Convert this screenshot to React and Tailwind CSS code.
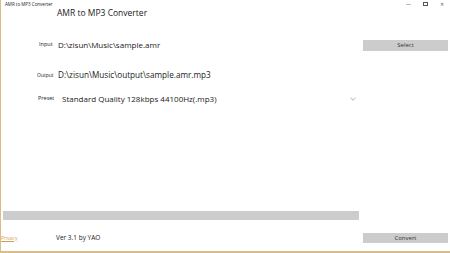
export default function App() {
  const f = { fontFamily: '"Open Sans", "Noto Sans", sans-serif' };
  return (
    <div
      className="w-[450px] h-[253px] bg-white border-l border-b-2 border-[#d9bd8c] flex flex-col text-[#1a1a1a] overflow-hidden"
      style={f}
    >
      <div className="h-[8px] flex items-center justify-between pl-[4px] pr-[6px]">
        <span className="text-[4.5px] leading-none">AMR to MP3 Converter</span>
        <div className="flex items-center gap-[12px] text-[5px] leading-none text-[#555]">
          <span>—</span>
          <span className="w-[5px] h-[4px] border border-[#555]" />
          <span>✕</span>
        </div>
      </div>
      <div className="h-[10px] flex items-center pl-[56px]">
        <span className="text-[8.5px] leading-none">AMR to MP3 Converter</span>
      </div>
      <div className="mt-[21px] h-[12px] flex items-center">
        <span className="ml-[38px] w-[19px] text-[5.5px] leading-none">Input</span>
        <span className="text-[8px] leading-none flex-1">D:\zisun\Music\sample.amr</span>
        <button className="mr-[2px] w-[85px] h-[11px] bg-[#cccccc] text-[6px] leading-none text-[#333]">Select</button>
      </div>
      <div className="mt-[18px] h-[12px] flex items-center">
        <span className="ml-[36px] w-[21px] text-[5px] leading-none">Output</span>
        <span className="text-[8.2px] leading-none">D:\zisun\Music\output\sample.amr.mp3</span>
      </div>
      <div className="mt-[12px] h-[12px] flex items-center">
        <span className="ml-[37px] w-[24px] text-[5.5px] leading-none">Preset</span>
        <span className="text-[8px] leading-none flex-1">Standard Quality 128kbps 44100Hz(.mp3)</span>
        <svg className="mr-[94px]" width="6" height="4" viewBox="0 0 6 4">
          <path d="M0.5 0.8 L3 3.2 L5.5 0.8" stroke="#888" strokeWidth="0.7" fill="none" />
        </svg>
      </div>
      <div className="mt-[106px] ml-[2px] w-[356px] h-[9px] bg-[#cccccc]" />
      <div className="mt-[13px] h-[10px] flex items-center">
        <span className="w-[55px] text-[5px] leading-none text-[#d69f55] underline">Privacy</span>
        <span className="text-[6.5px] leading-none flex-1">Ver 3.1 by YAO</span>
        <button className="mr-[2px] w-[85px] h-[10px] bg-[#cccccc] text-[6px] leading-none text-[#333]">Convert</button>
      </div>
    </div>
  );
}
